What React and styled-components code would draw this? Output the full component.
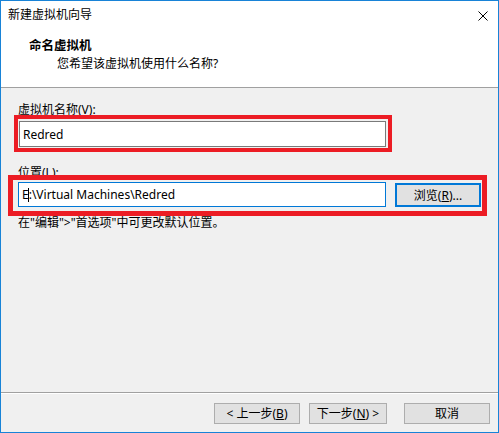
import React from "react";
import styled, { createGlobalStyle } from "styled-components";

const GlobalStyle = createGlobalStyle`
    html, body {
        margin: 0;
        padding: 0;
        background: #f0f0f0;
    }
    * {
        box-sizing: border-box;
    }
`;

const Window = styled.div`
    width: 499px;
    height: 433px;
    border: 1px solid #1883d7;
    background: #f0f0f0;
    display: flex;
    flex-direction: column;
    font-family: "Segoe UI", "Noto Sans", "Noto Sans CJK SC", sans-serif;
    font-size: 12px;
    color: #000;
`;

const Top = styled.div`
    height: 87px;
    background: #fff;
    border-bottom: 1px solid #a0a0a0;
    padding: 6px 0 0 7px;
`;

const TitleBar = styled.div`
    display: flex;
    align-items: center;
    justify-content: space-between;
    line-height: 16px;
    padding-right: 10px;
`;

const Close = styled.svg`
    width: 10px;
    height: 10px;
    margin-top: 2px;
`;

const Heading = styled.div`
    margin: 15px 0 0 21px;
    font-weight: bold;
    font-size: 12.5px;
    line-height: 16px;
`;

const Sub = styled.div`
    margin: 2px 0 0 49px;
    line-height: 16px;
`;

const Body = styled.div`
    flex: 1;
    padding: 14px 0 0 13px;
`;

const Label = styled.div`
    margin-left: 4px;
    margin-top: ${p => p.$top || 0}px;
    line-height: 16px;
`;

const Mark = styled.div`
    position: relative;
    display: flex;
    align-items: center;
    border: ${p => p.$w}px solid #ec1c24;
    margin-left: ${p => p.$left}px;
    margin-top: ${p => p.$top}px;
    padding: ${p => p.$pad};
    width: ${p => p.$width}px;
`;

const Field = styled.div`
    width: ${p => p.$width}px;
    height: ${p => p.$height}px;
    background: #fff;
    border: 1px solid ${p => (p.$focus ? "#0078d7" : "#7a7a7a")};
    padding-left: 3px;
    display: flex;
    align-items: center;
    white-space: nowrap;
`;

const Caret = styled.span`
    display: inline-block;
    width: 1px;
    height: 14px;
    background: #000;
    margin: 0 0 0 -1px;
`;

const Browse = styled.button`
    margin-left: 9px;
    width: 86px;
    height: 24px;
    border: 2px solid #0078d7;
    background: #e1e1e1;
    font: inherit;
    color: #000;
    padding: 0;
`;

const Hint = styled.div`
    margin: -1px 0 0 4px;
    line-height: 15px;
`;

const Footer = styled.div`
    height: 40px;
    border-top: 1px solid #a0a0a0;
    box-shadow: inset 0 1px #fff;
    display: flex;
    justify-content: flex-end;
    align-items: flex-start;
    padding: 10px 8px 0 0;
`;

const Button = styled.button`
    width: ${p => p.$width}px;
    height: 21px;
    margin-left: ${p => p.$gap}px;
    border: 1px solid #adadad;
    background: #e1e1e1;
    font: inherit;
    color: #000;
    padding: 0;
    line-height: 18px;
`;

const U = styled.span`
    text-decoration: underline;
`;

export default function App() {
    return (
        <>
            <GlobalStyle />
            <Window>
                <Top>
                    <TitleBar>
                        <span>新建虚拟机向导</span>
                        <Close viewBox="0 0 10 10">
                            <path d="M0.5 0.5 L9.5 9.5 M9.5 0.5 L0.5 9.5" stroke="#000" strokeWidth="1" fill="none" />
                        </Close>
                    </TitleBar>
                    <Heading>命名虚拟机</Heading>
                    <Sub>您希望该虚拟机使用什么名称?</Sub>
                </Top>
                <Body>
                    <Label>虚拟机名称(V):</Label>
                    <Mark $w={4} $left={0} $top={-3} $pad="2px 2px 1px 1px" $width={378}>
                        <Field $width={367} $height={26}>Redred</Field>
                    </Mark>
                    <Label $top={13}>位置(L):</Label>
                    <Mark $w={5} $left={-6} $top={-6} $pad="2px 1px 4px 5px" $width={479}>
                        <Field $width={368} $height={25} $focus>
                            E<Caret />:\Virtual Machines\Redred
                        </Field>
                        <Browse>浏览(<U>R</U>)...</Browse>
                    </Mark>
                    <Hint>在"编辑">"首选项"中可更改默认位置。</Hint>
                </Body>
                <Footer>
                    <Button $width={86} $gap={0}>&lt; 上一步(<U>B</U>)</Button>
                    <Button $width={78} $gap={9}>下一步(<U>N</U>) &gt;</Button>
                    <Button $width={86} $gap={17}>取消</Button>
                </Footer>
            </Window>
        </>
    );
}
